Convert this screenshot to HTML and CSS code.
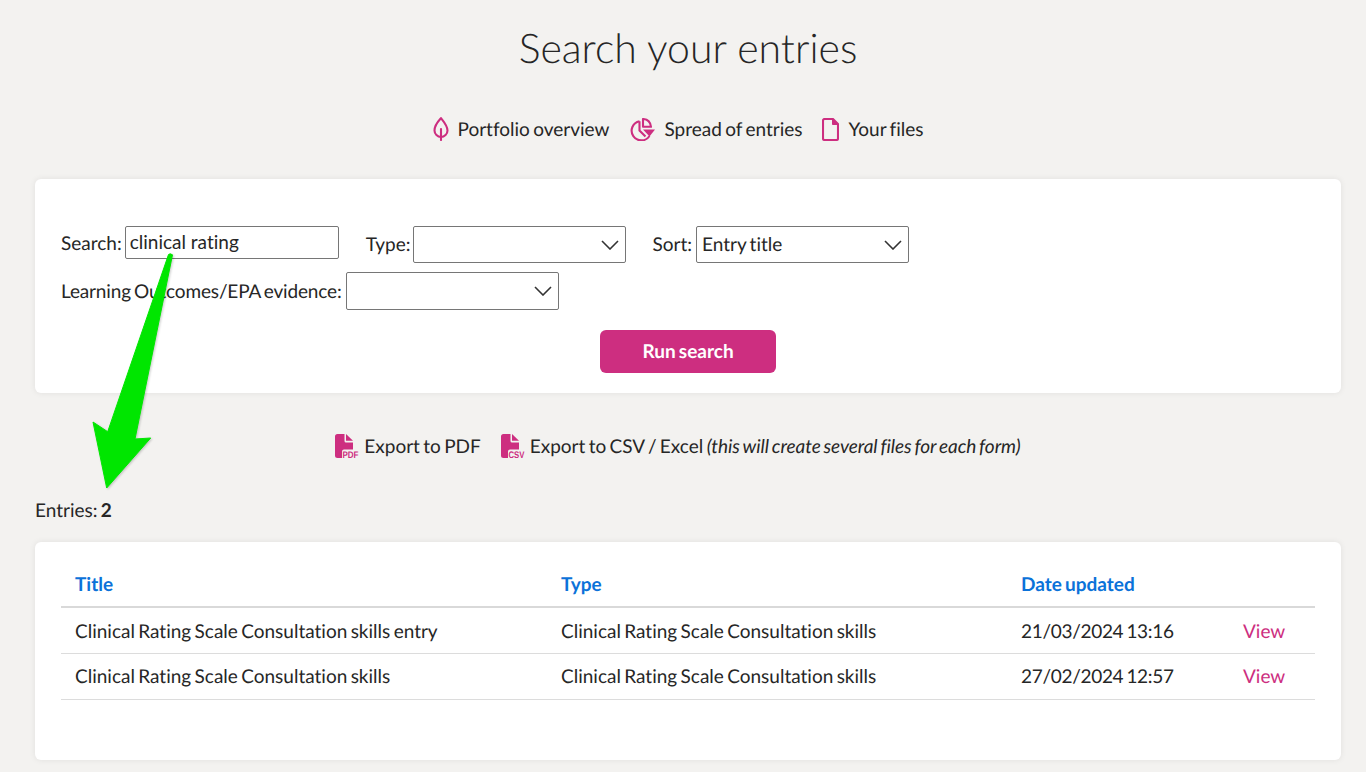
FILE: index.html
```html
<!DOCTYPE html>
<html lang="en">
<head>
<meta charset="utf-8">
<title>Search your entries</title>
<link rel="stylesheet" href="styles.css">
</head>
<body>
<main class="page">
  <h1 class="title">Search your entries</h1>
  <nav class="quick-links">
    <a class="quick-link"><svg class="ico-leaf" viewBox="0 0 16 24" fill="none" stroke="#cd2e80" stroke-width="2.100" stroke-linecap="round" stroke-linejoin="round"><path d="M8 1.200C5.500 4 1.500 8 1.500 13.500c0 3.500 3 6.500 6.500 6.500s6.500-3 6.500-6.500C14.500 8.500 10.500 4.500 8 1.200Z"/><path d="M8 12v11"/></svg>Portfolio overview</a>
    <a class="quick-link"><svg class="ico-pie" viewBox="0 0 26 23"><path d="M10.500 3.200A9.700 9.700 0 1 0 20.500 18" fill="none" stroke="#cd2e80" stroke-width="2.100"/><path d="M10.500 3.200V12.500L16.500 18.500" fill="none" stroke="#cd2e80" stroke-width="2.100"/><path d="M14 1c4.500.3 7.500 3.300 8 7.800h-8Z" fill="none" stroke="#cd2e80" stroke-width="2.100" stroke-linejoin="round"/><path d="M14 11.500H26L20.500 18.500Z" fill="#cd2e80"/></svg>Spread of entries</a>
    <a class="quick-link"><svg class="ico-file" viewBox="0 0 17 23" fill="none" stroke="#cd2e80" stroke-width="2.100" stroke-linejoin="round"><path d="M2.500 1h8.500L16 6V20.500a1.500 1.500 0 0 1-1.500 1.500H2.500A1.500 1.500 0 0 1 1 20.500V2.500A1.500 1.500 0 0 1 2.500 1Z"/><path d="M10.500 1.500 15.500 6.500H10.500Z" fill="#cd2e80" stroke-width="1"/></svg>Your files</a>
  </nav>

  <section class="card search-card">
    <div class="field-row">
      <label class="field field-search">Search:<input class="text-input" type="text" value="clinical rating"></label>
      <label class="field field-type">Type:<span class="select"><span class="select-value"></span><svg class="chev" viewBox="0 0 18 10" fill="none" stroke="#333" stroke-width="1.600"><path d="M1 1l8 8 8-8"/></svg></span></label>
      <label class="field field-sort">Sort:<span class="select"><span class="select-value">Entry title</span><svg class="chev" viewBox="0 0 18 10" fill="none" stroke="#333" stroke-width="1.600"><path d="M1 1l8 8 8-8"/></svg></span></label>
    </div>
    <div class="field-row second">
      <label class="field field-outcomes"><span class="outcomes-label">Learning Outcomes/EPA evidence:</span><span class="select"><span class="select-value"></span><svg class="chev" viewBox="0 0 18 10" fill="none" stroke="#333" stroke-width="1.600"><path d="M1 1l8 8 8-8"/></svg></span></label>
    </div>
    <div class="actions"><button class="run-btn" type="button">Run search</button></div>
  </section>

  <div class="exports">
    <a class="export"><svg class="ico-export" viewBox="0 0 24 24"><path d="M2.500 0H9.500V7a1.500 1.500 0 0 0 1.500 1.500H18V15.500H9A2 2 0 0 0 7 17.500V24H2.500A2.500 2.500 0 0 1 0 21.500V2.500A2.500 2.500 0 0 1 2.500 0Z" fill="#cd2e80"/><path d="M11 0 18 6.800H11Z" fill="#cd2e80"/><text class="ico-label" x="7.500" y="23.500" textLength="16" lengthAdjust="spacingAndGlyphs">PDF</text></svg>Export to PDF</a>
    <a class="export"><svg class="ico-export" viewBox="0 0 24 24"><path d="M2.500 0H9.500V7a1.500 1.500 0 0 0 1.500 1.500H18V15.500H9A2 2 0 0 0 7 17.500V24H2.500A2.500 2.500 0 0 1 0 21.500V2.500A2.500 2.500 0 0 1 2.500 0Z" fill="#cd2e80"/><path d="M11 0 18 6.800H11Z" fill="#cd2e80"/><text class="ico-label" x="7.500" y="23.500" textLength="16" lengthAdjust="spacingAndGlyphs">CSV</text></svg><span>Export to CSV / Excel <em class="note">(this will create several files for each form)</em></span></a>
  </div>

  <p class="entries">Entries: <strong>2</strong></p>

  <section class="card results-card">
    <table class="results">
      <thead>
        <tr><th class="col-title">Title</th><th class="col-type">Type</th><th class="col-date">Date updated</th><th class="col-view"></th></tr>
      </thead>
      <tbody>
        <tr><td>Clinical Rating Scale Consultation skills entry</td><td>Clinical Rating Scale Consultation skills</td><td class="date">21/03/2024 13:16</td><td><a class="view">View</a></td></tr>
        <tr><td>Clinical Rating Scale Consultation skills</td><td>Clinical Rating Scale Consultation skills</td><td class="date">27/02/2024 12:57</td><td><a class="view">View</a></td></tr>
      </tbody>
    </table>
  </section>
</main>
<svg class="arrow" viewBox="0 0 1366 772" aria-hidden="true"><path d="M168.500 254.500Q170 253 172.500 254.800L135 439 150.700 438 106.700 488 93 422 107.700 431.700Z" fill="#00e600" stroke="#00e600" stroke-width="1" stroke-linejoin="round"/></svg>
</body>
</html>
```

FILE: styles.css
```css
* { box-sizing: border-box; }
html, body { margin: 0; height: 772px; overflow: hidden; }
body {
  background: #f3f2f0;
  color: #262626;
  font-family: Lato, "Liberation Sans", sans-serif;
  font-size: 19px;
  line-height: 26px;
  word-spacing: -1.500px;
  text-rendering: geometricPrecision;
  font-variant-ligatures: none;
}
.page { padding: 0 25px 0 35px; }
.title {
  margin: 0;
  padding-top: 23px;
  height: 98px;
  text-align: center;
  font-size: 41px;
  line-height: 50px;
  font-weight: 300;
  word-spacing: 0;
}
.quick-links {
  display: flex;
  justify-content: center;
  align-items: center;
  height: 26px;
  margin-top: 18px;
}
.quick-link { display: flex; align-items: center; gap: 9px; margin-right: 20px; padding-top: 2px; }
.ico-leaf { width: 16px; height: 24px; margin-top: -2px; }
.ico-pie { width: 26px; height: 23px; margin-top: -2px; }
.ico-file { width: 17px; height: 23px; margin-top: -2px; }
.card {
  background: #fff;
  border-radius: 6px;
  box-shadow: 0 0 6px rgba(0, 0, 0, 0.08);
}
.search-card { margin-top: 37px; height: 214px; padding: 47px 26px 0; }
.field-row { display: flex; height: 37px; }
.field-row.second { margin-top: 9px; height: 38px; }
.field { display: flex; align-items: flex-start; gap: 4px; white-space: nowrap; line-height: 38px; }
.field-search { gap: 3px; line-height: 35px; }
.field-outcomes { line-height: 40px; }
.outcomes-label { letter-spacing: -0.150px; }
.field-type { gap: 2px; margin-left: 27px; }
.field-sort { margin-left: 27px; }
.text-input {
  width: 214px;
  height: 33px;
  padding: 0 4px 2px;
  border: 1px solid #767676;
  border-radius: 2px;
  background: #fff;
  color: #262626;
  font: inherit;
  font-variant-ligatures: none;
  line-height: 24px;
}
.select {
  display: flex;
  align-items: center;
  justify-content: space-between;
  width: 213px;
  height: 37px;
  padding: 0 6px 0 5px;
  border: 1px solid #767676;
  border-radius: 2px;
  background: #fff;
  line-height: 24px;
}
.second .select { height: 38px; }
.chev { width: 18px; height: 10px; }
.actions { display: flex; justify-content: center; margin-top: 20px; }
.run-btn {
  width: 176px;
  height: 43px;
  padding: 0;
  border: 0;
  border-radius: 6px;
  background: #cd2e80;
  color: #fff;
  font: 700 19px/24px Lato, "Liberation Sans", sans-serif;
  word-spacing: -1.500px;
  text-rendering: geometricPrecision;
}
.exports {
  display: flex;
  justify-content: center;
  align-items: center;
  height: 26px;
  margin-top: 40px;
}
.export { display: flex; align-items: center; gap: 5px; margin-right: 20px; padding-top: 2px; }
.note { letter-spacing: -0.060px; }
.ico-export { width: 24px; height: 24px; margin-top: -2px; overflow: visible; }
.ico-label { font: 700 9.500px "Liberation Sans", sans-serif; fill: #cd2e80; }
.entries { margin: 39px 0 0; height: 24px; }
.results-card { margin-top: 20px; height: 218px; padding: 19px 26px 0; }
.results { width: 100%; border-collapse: collapse; table-layout: fixed; }
.results th, .results td { padding: 2px 14px 0; text-align: left; }
.results th {
  height: 46px;
  color: #0b72d9;
  font-weight: 700;
  border-bottom: 2px solid #d9d9d9;
}
.results td { height: 46px; border-bottom: 1px solid #dcdcdc; }
.results tbody tr:first-child td { padding-top: 4px; }
.results .date { letter-spacing: -0.300px; }
.col-title { width: 486px; }
.col-type { width: 460px; }
.col-date { width: 222px; }
.view { color: #cd2e80; }
.arrow {
  position: absolute;
  left: 0;
  top: 0;
  width: 1366px;
  height: 772px;
  pointer-events: none;
  filter: drop-shadow(1px 1px 1px rgba(0, 0, 0, 0.2));
}
```
